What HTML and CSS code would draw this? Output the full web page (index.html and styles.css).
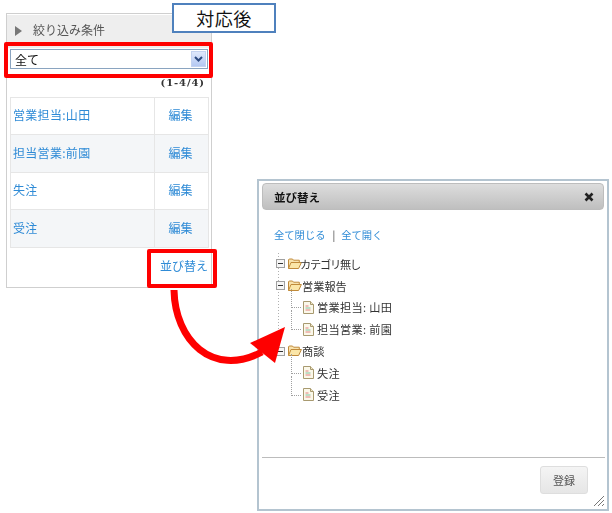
FILE: index.html
```html
<!DOCTYPE html>
<html lang="ja">
<head>
<meta charset="utf-8">
<title>対応後</title>
<link rel="stylesheet" href="styles.css">
</head>
<body>
<svg class="defs" width="0" height="0" aria-hidden="true">
  <symbol id="folder" viewBox="0 0 14 12">
    <path d="M.5 10.5V1.8l.7-.8h3.3l1 1.2h5.8v2" fill="#f8e2ac" stroke="#c08a3a"/>
    <path d="M.5 10.5 3 4.5h10.4l-2.8 6z" fill="#fbe6a8" stroke="#c08a3a" stroke-linejoin="round"/>
  </symbol>
  <symbol id="leaf" viewBox="0 0 11 13">
    <path d="M.5.5h7l3 3v9H.5z" fill="#fbf8ea" stroke="#a89a70"/>
    <path d="M7.5.5v3h3" fill="#efe6c4" stroke="#a89a70"/>
    <path d="M2.5 5h3" stroke="#e58080"/><path d="M2.5 7h5" stroke="#7fc4a0"/><path d="M2.5 9h5" stroke="#e58080"/>
  </symbol>
  <symbol id="minus" viewBox="0 0 9 9">
    <rect x=".5" y=".5" width="8" height="8" fill="#f6f6f6" stroke="#a0a0a0"/>
    <path d="M2 4.5h5" stroke="#333"/>
  </symbol>
</svg>

<section class="panel">
  <header class="panel-head">
    <span class="tri"></span>
    <span>絞り込み条件</span>
  </header>
  <div class="select">
    <span class="select-value">全て</span>
    <span class="select-btn">
      <svg width="9" height="6" viewBox="0 0 9 6"><path d="M1 1l3.5 3.5L8 1" fill="none" stroke="#2c4a80" stroke-width="2"/></svg>
    </span>
  </div>
  <div class="count">(1-4/4)</div>
  <table class="list">
    <tr><td class="name"><a>営業担当:山田</a></td><td class="edit"><a>編集</a></td></tr>
    <tr class="alt"><td class="name"><a>担当営業:前園</a></td><td class="edit"><a>編集</a></td></tr>
    <tr><td class="name"><a>失注</a></td><td class="edit"><a>編集</a></td></tr>
    <tr class="alt"><td class="name"><a>受注</a></td><td class="edit"><a>編集</a></td></tr>
  </table>
  <div class="sort"><a>並び替え</a></div>
</section>

<section class="dialog">
  <header class="dialog-head">
    <span>並び替え</span>
    <svg class="close" width="10" height="10" viewBox="0 0 10 10"><path d="M1.5 1.5l7 7M8.5 1.5l-7 7" stroke="#222" stroke-width="2.6"/></svg>
  </header>
  <div class="dialog-body">
    <div class="links"><a>全て閉じる</a><span class="sep">|</span><a>全て開く</a></div>
    <ul class="tree">
      <li class="node"><svg class="exp"><use href="#minus"/></svg><svg class="fold"><use href="#folder"/></svg><span class="cat-first">カテゴリ無し</span></li>
      <li class="node"><svg class="exp"><use href="#minus"/></svg><svg class="fold"><use href="#folder"/></svg><span>営業報告</span></li>
      <li class="node child"><svg class="doc"><use href="#leaf"/></svg><span>営業担当: 山田</span></li>
      <li class="node child"><svg class="doc"><use href="#leaf"/></svg><span>担当営業: 前園</span></li>
      <li class="node"><svg class="exp"><use href="#minus"/></svg><svg class="fold"><use href="#folder"/></svg><span>商談</span></li>
      <li class="node child"><svg class="doc"><use href="#leaf"/></svg><span>失注</span></li>
      <li class="node child"><svg class="doc"><use href="#leaf"/></svg><span>受注</span></li>
    </ul>
  </div>
  <footer class="dialog-foot">
    <button class="submit" type="button">登録</button>
    <svg class="grip" width="12" height="12" viewBox="0 0 12 12"><path d="M11 1L1 11M11 5l-6 6M11 9l-2 2" stroke="#777" fill="none"/></svg>
  </footer>
</section>

<div class="label">対応後</div>
<div class="mark mark-select"></div>
<div class="mark mark-sort"></div>
<svg class="arrow" width="612" height="513" viewBox="0 0 612 513" aria-hidden="true">
  <path d="M174 290C175 340 212 378 262 352" fill="none" stroke="#fe0000" stroke-width="7"/>
  <path d="M250 343 285 327 275 363z" fill="#fe0000"/>
</svg>
</body>
</html>
```
FILE: styles.css
```css
* { box-sizing: border-box; }
html, body { margin: 0; padding: 0; }
body {
  position: relative;
  width: 612px;
  height: 513px;
  overflow: hidden;
  background: #fff;
  font-family: "Noto Sans CJK JP", "Liberation Sans", sans-serif;
  font-size: 12px;
  color: #333;
}
a { color: #2f8bd6; }
.defs { position: absolute; }

/* Left panel */
.panel {
  position: absolute;
  left: 6px;
  top: 13px;
  width: 206px;
  height: 275px;
  border: 1px solid #cfcfcf;
  padding: 0 3px;
  display: flex;
  flex-direction: column;
  filter: blur(.3px);
}
.panel-head {
  margin: 1px -3px 0;
  height: 33px;
  padding: 0 0 4px 8px;
  background: #eeeeee;
  display: flex;
  align-items: center;
  gap: 11px;
  color: #555;
}
.tri {
  width: 0;
  height: 0;
  margin-top: 3px;
  border-left: 7px solid #777;
  border-top: 5px solid transparent;
  border-bottom: 5px solid transparent;
}
.select {
  margin-top: 1px;
  height: 20px;
  border: 1px solid #8aa4c0;
  display: flex;
  align-items: center;
  justify-content: space-between;
  color: #111;
  padding: 0 1px 0 4px;
  background: #fff;
}
.select-btn {
  width: 15px;
  height: 16px;
  background: linear-gradient(#dfe8fb, #b4c8f2);
  border: 1px solid #c3d2f0;
  display: flex;
  align-items: center;
  justify-content: center;
}
.count {
  height: 28px;
  padding-top: 7px;
  padding-right: 3px;
  text-align: right;
  font-family: "DejaVu Serif", serif;
  font-weight: 700;
  font-size: 10px;
  line-height: 14px;
  letter-spacing: .9px;
  color: #333;
}
.list {
  width: 199px;
  border-collapse: collapse;
  border: 1px solid #e2e2e2;
  table-layout: fixed;
}
.list td {
  height: 38px;
  padding: 0 0 3px;
  border: 1px solid #e6e6e6;
}
.list tr:nth-child(odd) td { height: 37px; }
.list .name { padding-left: 2px; white-space: nowrap; letter-spacing: .3px; }
.list .edit { width: 54px; text-align: center; padding-right: 2px; }
.alt td { background: #f4f6f8; }
.sort {
  text-align: right;
  padding: 9px 0 0 0;
}

/* Dialog */
.dialog {
  position: absolute;
  left: 257px;
  top: 179px;
  width: 352px;
  height: 332px;
  border: 2px solid #b4c4d0;
  padding: 2px 3px 0;
  display: flex;
  flex-direction: column;
  background: #fff;
  filter: blur(.3px);
}
.dialog-head {
  height: 27px;
  border: 1px solid #bdbdbd;
  border-radius: 4px;
  background: linear-gradient(#dddddd, #bfbfbf);
  padding: 0 9px 0 11px;
  display: flex;
  align-items: center;
  justify-content: space-between;
  font-weight: 700;
  font-size: 11.5px;
  color: #111;
}
.dialog-body {
  flex: 1;
  padding: 16px 0 0 12px;
}
.links { display: flex; align-items: center; height: 16px; font-size: 10.3px; }
.sep { margin: 0 6px 0 7px; color: #444; }
.tree {
  list-style: none;
  margin: 11px 0 0 2px;
  padding: 0;
  font-size: 11.2px;
  background: repeating-linear-gradient(#b0b0b0 0 1px, transparent 1px 3px) 2px 0 / 1px 98px no-repeat;
}
.node {
  height: 21.8px;
  display: flex;
  align-items: center;
  white-space: nowrap;
  color: #333;
}
.exp { width: 9px; height: 9px; flex: none; }
.fold { width: 14px; height: 12px; margin: 0 0 0 3px; flex: none; }
.cat-first { margin-left: -2px; letter-spacing: -1.2px; }
.child {
  position: relative;
  padding-left: 27px;
  letter-spacing: .3px;
}
.child::before {
  content: "";
  position: absolute;
  left: 15px;
  top: -8px;
  bottom: 10px;
  width: 9px;
  border-left: 1px dotted #a0a0a0;
  border-bottom: 1px dotted #a0a0a0;
}
.doc { width: 11px; height: 13px; margin-right: 3px; flex: none; }
.dialog-foot {
  position: relative;
  flex: none;
  height: 52px;
  margin: 0 -1px 0 0;
  border-top: 1px solid #bcbcbc;
  display: flex;
  justify-content: flex-end;
  padding: 8px 17px 0 0;
}
.submit {
  width: 48px;
  height: 28px;
  border: 1px solid #dedede;
  border-radius: 3px;
  background: linear-gradient(#f4f4f4, #e6e6e6);
  font: inherit;
  font-size: 11px;
  color: #555;
  padding: 0;
}
.grip { position: absolute; right: 0; bottom: 2px; }

/* Annotations laid over the screenshot */
.label {
  position: absolute;
  left: 172px;
  top: 3px;
  width: 104px;
  height: 30px;
  border: 2px solid #4f81bd;
  background: #fff;
  font-size: 18px;
  line-height: 26px;
  text-align: center;
  color: #111;
  letter-spacing: .5px;
}
.mark {
  position: absolute;
  border: 4px solid #fe0000;
  border-radius: 2px;
}
.mark-select { left: 4px; top: 42px; width: 209px; height: 36px; }
.mark-sort { left: 147px; top: 249px; width: 70px; height: 39px; }
.arrow { position: absolute; left: 0; top: 0; pointer-events: none; }
```
